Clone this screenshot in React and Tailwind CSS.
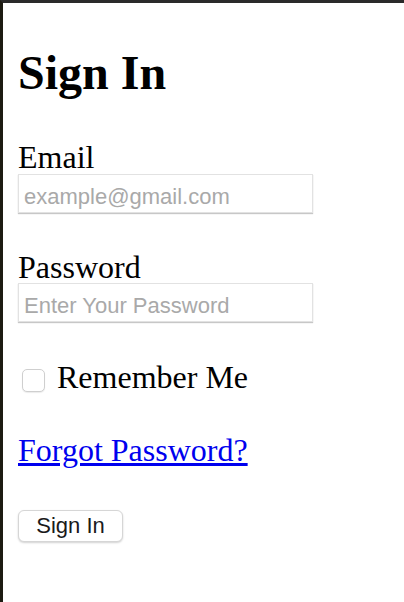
import { useState } from "react";

const serif = "font-['Liberation_Serif','Times_New_Roman',serif]";
const sans = "font-['Liberation_Sans',Arial,sans-serif]";

const inputClass =
  "block w-[295px] h-[39px] pl-[5px] pt-[11px] pb-[4px] text-[22px] leading-[22px] text-black bg-white border border-[#e2e2e2] shadow-[0_1px_1px_rgba(0,0,0,0.22)] outline-none placeholder:text-[#a9a9a9] " +
  sans;

export default function App() {
  const [form, setForm] = useState({ email: "", password: "", remember: false });

  return (
    <div className="min-h-[602px] bg-white border-t-[3px] border-t-[#2a2a2a] border-l-[3px] border-l-[#1c1b12]">
      <form
        className={"pl-[15px] pt-[46px] text-black " + serif}
        onSubmit={(e) => e.preventDefault()}
      >
        <h1 className="text-[48px] leading-[48px] font-bold">Sign In</h1>

        {/* Email */}
        <label className="block mt-[44px] text-[32px] leading-[32px]">Email</label>
        <input
          type="email"
          value={form.email}
          onChange={(e) => setForm({ ...form, email: e.target.value })}
          placeholder="example@gmail.com"
          className={"mt-[1px] " + inputClass}
        />

        {/* Password */}
        <label className="block mt-[38px] text-[32px] leading-[32px]">Password</label>
        <input
          type="password"
          value={form.password}
          onChange={(e) => setForm({ ...form, password: e.target.value })}
          placeholder="Enter Your Password"
          className={inputClass}
        />

        <div className="flex items-start mt-[39px]">
          <input
            type="checkbox"
            id="remember"
            checked={form.remember}
            onChange={(e) => setForm({ ...form, remember: e.target.checked })}
            className="appearance-none shrink-0 w-[23px] h-[23px] mt-[8px] ml-[4px] mr-[12px] rounded-[5px] border border-[#cfcfcf] bg-white shadow-[0_1px_1px_rgba(0,0,0,0.08)] checked:bg-[#0a84ff]"
          />
          <label htmlFor="remember" className="text-[32px] leading-[32px]">
            Remember Me
          </label>
        </div>

        <div className="mt-[41px]">
          <a href="#" className="text-[32px] leading-[32px] text-[#0000ee] underline">
            Forgot Password?
          </a>
        </div>

        <button
          type="submit"
          className={
            "block mt-[42px] w-[105px] h-[32px] rounded-[6px] bg-white border border-[#d6d6d6] shadow-[0_1px_2px_rgba(0,0,0,0.18)] text-[22px] leading-[22px] text-[#1a1a1a] " +
            sans
          }
        >
          Sign In
        </button>
      </form>
    </div>
  );
}
